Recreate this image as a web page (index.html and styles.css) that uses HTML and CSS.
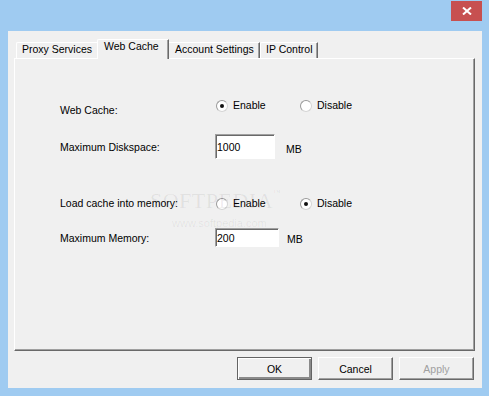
FILE: index.html
```html
<!DOCTYPE html>
<html lang="en">
<head>
  <meta charset="UTF-8">
  <title>Web Cache</title>
  <link rel="stylesheet" href="styles.css">
</head>
<body>

  <div class="window">
    <div class="titlebar">
      <div class="close">
        <svg width="10" height="8" viewBox="0 0 10 8">
          <path d="M1 0.5 L9 7.5 M9 0.5 L1 7.5" stroke="#fff" stroke-width="2"/>
        </svg>
      </div>
    </div>

    <div class="client">
      <div class="tabs">
        <div class="tab tab-proxy">Proxy Services</div>
        <div class="tab tab-cache active">Web Cache</div>
        <div class="tab tab-account">Account Settings</div>
        <div class="tab tab-ip">IP Control</div>
      </div>

      <div class="panel">
        <div class="row row-cache">
          <div class="label">Web Cache:</div>
          <div class="option"><span class="radio checked"></span>Enable</div>
          <div class="option"><span class="radio"></span>Disable</div>
        </div>

        <div class="row row-disk">
          <div class="label">Maximum Diskspace:</div>
          <input class="field field-disk" type="text" value="1000">
          <div class="unit">MB</div>
        </div>

        <div class="row row-load">
          <div class="label">Load cache into memory:</div>
          <div class="option"><span class="radio"></span>Enable</div>
          <div class="option"><span class="radio checked"></span>Disable</div>
        </div>

        <div class="row row-memory">
          <div class="label">Maximum Memory:</div>
          <input class="field field-memory" type="text" value="200">
          <div class="unit">MB</div>
        </div>
      </div>

      <div class="buttons">
        <button class="btn default">OK</button>
        <button class="btn">Cancel</button>
        <button class="btn" disabled>Apply</button>
      </div>
    </div>

    <div class="watermark">
      <span class="wm-big">SOFTPEDIA</span><span class="wm-tm">™</span>
      <span class="wm-url">www.softpedia.com</span>
    </div>
  </div>

</body>
</html>
```

FILE: styles.css
```css
* { box-sizing: border-box; }

body, html {
  margin: 0;
  padding: 0;
  font-family: 'Liberation Sans', Arial, sans-serif;
  font-size: 10.5px;
  color: #000;
}

.window {
  position: relative;
  width: 489px;
  height: 396px;
  background-color: #9fcbf1;
  display: flex;
  flex-direction: column;
}

.titlebar {
  height: 31px;
  display: flex;
  justify-content: flex-end;
  padding-right: 7px;
}

.close {
  width: 31px;
  height: 20px;
  margin-top: 1px;
  background-color: #c75050;
  display: flex;
  align-items: center;
  justify-content: center;
}

.client {
  flex: 1;
  margin: 0 7px 8px 8px;
  background-color: #f0f0f0;
  padding: 8px 7px 8px 6px;
  display: flex;
  flex-direction: column;
}

/* tabs */
.tabs {
  height: 19px;
  display: flex;
  align-items: flex-end;
  padding-left: 2px;
  position: relative;
  z-index: 1;
}

.tab {
  height: 16px;
  line-height: 13px;
  padding-left: 5px;
  white-space: nowrap;
  background-color: #f0f0f0;
  border-top: 1px solid #fff;
  border-left: 1px solid #fff;
  border-right: 1px solid #696969;
  border-top-left-radius: 2px;
  box-shadow: inset -1px 0 #a0a0a0;
}

.tab.active {
  position: relative;
  z-index: 1;
  height: 20px;
  margin: 0 -2px -1px -2px;
  padding-left: 6px;
}

.tab-proxy { width: 83px; }
.tab-cache { width: 72px; }
.tab-account { width: 93px; padding-left: 7px; }
.tab-ip { width: 58px; padding-left: 5px; }

/* panel */
.panel {
  height: 293px;
  border: 1px solid;
  border-color: #fff #696969 #696969 #fff;
  box-shadow: inset -1px -1px #a0a0a0;
  padding: 40px 0 0 45px;
}

.row {
  display: flex;
  align-items: flex-start;
  line-height: 13px;
}

.label {
  width: 155px;
  white-space: nowrap;
}

.row-cache { height: 18px; }
.row-cache .label { margin-top: 5px; }

.row-disk { height: 25px; margin-top: 17px; }
.row-disk .label { margin-top: 7px; }
.row-disk .unit { margin: 9px 0 0 11px; }

.row-load { height: 13px; margin-top: 38px; }

.row-memory { height: 19px; margin-top: 18px; }
.row-memory .label { margin-top: 4px; }
.row-memory .unit { margin: 5px 0 0 8px; }

.option {
  width: 84px;
  display: flex;
  align-items: center;
  gap: 5px;
  margin-left: 1px;
  margin-right: -1px;
}

.radio {
  width: 12px;
  height: 12px;
  border-radius: 50%;
  border: 1px solid #9a9a9a;
  border-bottom-color: #d4d4d4;
  border-right-color: #d4d4d4;
  background-color: #fff;
  display: flex;
  align-items: center;
  justify-content: center;
}

.radio.checked::after {
  content: '';
  width: 4px;
  height: 4px;
  border-radius: 50%;
  background-color: #111;
}

.field {
  font-family: inherit;
  font-size: 10.5px;
  padding: 0 0 0 1px;
  margin: 0;
  outline: none;
  background-color: #fff;
  border: 1px solid;
  border-color: #a0a0a0 #fff #fff #a0a0a0;
  box-shadow: inset 1px 1px #696969;
  color: #000;
}

.field-disk { width: 60px; height: 25px; }
.field-memory { width: 64px; height: 19px; }

/* buttons */
.buttons {
  margin-top: 6px;
  padding-right: 1px;
  display: flex;
  justify-content: flex-end;
  gap: 6px;
}

.btn {
  width: 75px;
  height: 23px;
  font-family: inherit;
  font-size: 10.5px;
  color: #000;
  background-color: #f0f0f0;
  border: 1px solid;
  border-color: #fff #696969 #696969 #fff;
  box-shadow: inset -1px -1px #a0a0a0;
  padding: 0;
}

.btn.default {
  border: 1px solid #646464;
  box-shadow: inset 1px 1px #fff, inset -2px -2px #8a8a8a;
}

.btn:disabled {
  color: #a0a0a0;
}

/* watermark over the dialog */
.watermark {
  position: absolute;
  left: 150px;
  top: 188px;
  width: 140px;
  pointer-events: none;
  color: rgba(0, 0, 0, 0.07);
  font-family: 'Liberation Serif', serif;
}

.wm-big {
  font-size: 22px;
  letter-spacing: 0.5px;
}

.wm-tm {
  font-size: 8px;
  vertical-align: top;
}

.wm-url {
  display: block;
  margin: 3px 0 0 22px;
  font-family: 'Liberation Sans', sans-serif;
  font-size: 11px;
}
```
